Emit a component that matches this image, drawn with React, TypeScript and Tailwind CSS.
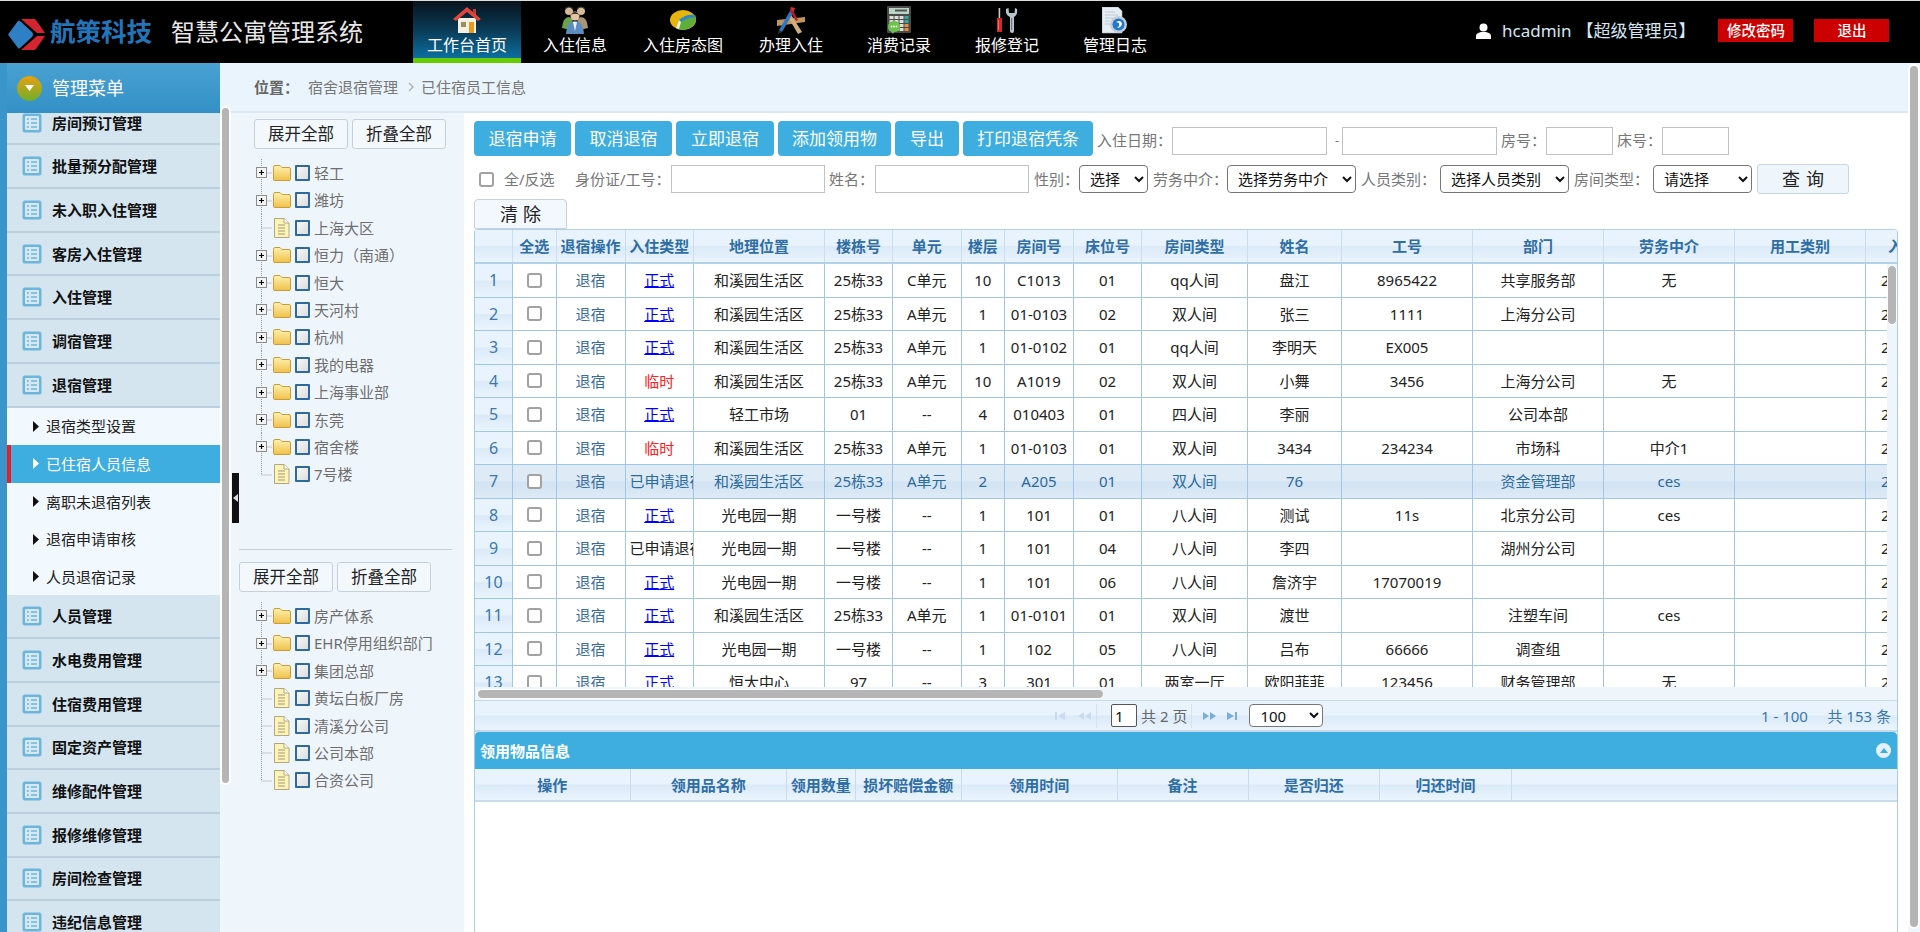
import React from "react";

const cols = "grid grid-cols-[38px_43.5px_69px_68.5px_131px_68px_68.5px_43.5px_69px_68px_106px_94px_131px_131px_131px_131px_131px]";
const headBg = "bg-[linear-gradient(180deg,#e9f3fd_0%,#e9f3fd_48%,#dbeaf8_52%,#eaf4fd_100%)]";

const menuTop = ["房间预订管理", "批量预分配管理", "未入职入住管理", "客房入住管理", "入住管理", "调宿管理", "退宿管理"];
const menuBottom = ["人员管理", "水电费用管理", "住宿费用管理", "固定资产管理", "维修配件管理", "报修维修管理", "房间检查管理", "违纪信息管理"];
const subs = ["退宿类型设置", "已住宿人员信息", "离职未退宿列表", "退宿申请审核", "人员退宿记录"];

const heads = ["", "全选", "退宿操作", "入住类型", "地理位置", "楼栋号", "单元", "楼层", "房间号", "床位号", "房间类型", "姓名", "工号", "部门", "劳务中介", "用工类别"];

type Row = string[];
const H = "和溪园生活区", G = "光电园一期";
const rows: Row[] = [
  ["正式", H, "25栋33", "C单元", "10", "C1013", "01", "qq人间", "盘江", "8965422", "共享服务部", "无"],
  ["正式", H, "25栋33", "A单元", "1", "01-0103", "02", "双人间", "张三", "1111", "上海分公司", ""],
  ["正式", H, "25栋33", "A单元", "1", "01-0102", "01", "qq人间", "李明天", "EX005", "", ""],
  ["临时", H, "25栋33", "A单元", "10", "A1019", "02", "双人间", "小舞", "3456", "上海分公司", "无"],
  ["正式", "轻工市场", "01", "--", "4", "010403", "01", "四人间", "李丽", "", "公司本部", ""],
  ["临时", H, "25栋33", "A单元", "1", "01-0103", "01", "双人间", "3434", "234234", "市场科", "中介1"],
  ["已申请退宿", H, "25栋33", "A单元", "2", "A205", "01", "双人间", "76", "", "资金管理部", "ces"],
  ["正式", G, "一号楼", "--", "1", "101", "01", "八人间", "测试", "11s", "北京分公司", "ces"],
  ["已申请退宿", G, "一号楼", "--", "1", "101", "04", "八人间", "李四", "", "湖州分公司", ""],
  ["正式", G, "一号楼", "--", "1", "101", "06", "八人间", "詹济宇", "17070019", "", ""],
  ["正式", H, "25栋33", "A单元", "1", "01-0101", "01", "双人间", "渡世", "", "注塑车间", "ces"],
  ["正式", G, "一号楼", "--", "1", "102", "05", "八人间", "吕布", "66666", "调查组", ""],
  ["正式", "恒大中心", "97", "--", "3", "301", "01", "两室一厅", "欧阳菲菲", "123456", "财务管理部", "无"],
];

function HouseIcon() {
  return (
    <svg width="28" height="27" viewBox="0 0 28 27">
      <rect x="20" y="2" width="3" height="6" fill="#b5403a" />
      <rect x="5" y="11" width="18" height="15" fill="#f5f0e4" />
      <rect x="16" y="15" width="5" height="11" fill="#eb9a1e" />
      <rect x="8" y="15" width="5" height="5" fill="#9c8f5e" />
      <path d="M14 0 L28 12 L25 14 L14 5 L3 14 L0 12 Z" fill="#e2443c" />
    </svg>
  );
}
function PeopleIcon() {
  return (
    <svg width="26" height="28" viewBox="0 0 26 28">
      <circle cx="7" cy="5" r="4" fill="#d9b99a" />
      <path d="M3 4 Q7 -1 11 4 L11 2 Q7 -1 3 2Z" fill="#333" />
      <circle cx="19" cy="5" r="4" fill="#d9b99a" />
      <path d="M15 4 Q19 -1 23 4 L23 2 Q19 -1 15 2Z" fill="#333" />
      <path d="M0 22 Q1 11 7 11 L11 13 L8 24 Z" fill="#6aa24a" />
      <path d="M26 22 Q25 11 19 11 L15 13 L18 24 Z" fill="#a89672" />
      <path d="M4 28 Q5 15 13 15 Q21 15 22 28 Z" fill="#5c8cc0" />
      <path d="M11 16 L13 25 L15 16 Z" fill="#eef4fa" />
      <circle cx="13" cy="10" r="4.5" fill="#e4c4a4" />
      <path d="M8.5 9 Q13 3 17.5 9 Q13 6.5 8.5 9Z" fill="#222" />
    </svg>
  );
}
function PieIcon() {
  return (
    <svg width="26" height="20" viewBox="0 0 26 20">
      <ellipse cx="13" cy="10" rx="13" ry="10" fill="#e8b40e" />
      <path d="M9 10 Q16 4 25 5 Q27 9 25 13 Q20 20 13 20 Q8 20 6 18 Z" fill="#5dae3a" />
      <path d="M9 10 Q16 4 25 5 L25.6 7 Q16 8 11 12 Z" fill="#2f86c9" />
      <path d="M6 18 L9 10 L11 12 L9 19 Z" fill="#f3f3d0" />
    </svg>
  );
}
function ToolsAIcon() {
  return (
    <svg width="28" height="28" viewBox="0 0 28 28">
      <path d="M0 14 L28 11 L28 16 L0 20 Z" fill="#c09460" />
      <path d="M13 7 L25 26 L21 28 L11 11 Z" fill="#cfae80" />
      <path d="M16 7 L5 26 L2 24 L13 5 Z" fill="#2a78c4" />
      <path d="M13 5 L14 1 L18 2 L16 7 Z" fill="#d8323c" />
      <path d="M2 24 L1 28 L5 26 Z" fill="#333" />
      <path d="M15 3 L21 14 L19 15 L13 5 Z" fill="#b02030" />
    </svg>
  );
}
function CalcIcon() {
  const c = ["#ddd", "#ddd", "#ddd", "#3aa6a0", "#ddd", "#ddd", "#ddd", "#3aa6a0", "#ddd", "#ddd", "#ddd", "#e8913a", "#ddd", "#ddd", "#ddd", "#e8913a"];
  return (
    <svg width="24" height="28" viewBox="0 0 24 28">
      <rect width="24" height="27" rx="1" fill="#4a4a4a" />
      <rect x="2" y="2" width="20" height="6" fill="#b9d4c4" />
      <rect x="8" y="3.5" width="12" height="2" fill="#555" />
      {c.map((f, i) => (
        <rect key={i} x={2.5 + (i % 4) * 5} y={10 + Math.floor(i / 4) * 4} width="4" height="3" fill={f} />
      ))}
      <path d="M1 21 Q1 15 7 15 Q13 15 13 21 Q13 26 7 26 L6 28 L4 25.5 Q1 24 1 21Z" fill="#6dc24a" />
      <circle cx="4.5" cy="20.5" r="0.9" fill="#fff" />
      <circle cx="7" cy="20.5" r="0.9" fill="#fff" />
      <circle cx="9.5" cy="20.5" r="0.9" fill="#fff" />
    </svg>
  );
}
function RepairIcon() {
  return (
    <svg width="22" height="25" viewBox="0 0 22 25">
      <rect x="2.6" y="0" width="1.6" height="10" fill="#c8c8c8" />
      <path d="M1 10 H6 V24 H1Z" fill="#cf2a2a" />
      <rect x="2" y="12" width="1" height="10" fill="#f07070" />
      <path d="M10 1 Q9 7 14 9 L14 23 Q14 25 16 25 Q18 25 18 23 L18 9 Q22 7 21 1 L19 0 L18.5 5 L13 5 L12.5 0 Z" fill="#b8c4cc" />
      <path d="M15 10 h1.2 v12 h-1.2Z" fill="#6c7a84" />
    </svg>
  );
}
function DocIcon() {
  return (
    <svg width="26" height="27" viewBox="0 0 26 27">
      <path d="M0 0 H16 L20 4 V26 H0 Z" fill="#e7edf5" stroke="#aab6c4" strokeWidth="0.6" />
      <path d="M3 5 H13 M3 8 H16 M3 11 H11 M3 14 H8 M3 17 H8" stroke="#b4bfcc" strokeWidth="0.8" />
      <circle cx="16.5" cy="17.5" r="8.5" fill="#c4ccd6" />
      <circle cx="16.5" cy="17.5" r="6" fill="#1f78c8" />
      <path d="M14 15 Q19 12 20 17 Q19 21 15 21 Q18 19 17 16 Z" fill="#fff" />
    </svg>
  );
}

const navs: [string, React.ReactNode][] = [
  ["工作台首页", <HouseIcon />],
  ["入住信息", <PeopleIcon />],
  ["入住房态图", <PieIcon />],
  ["办理入住", <ToolsAIcon />],
  ["消费记录", <CalcIcon />],
  ["报修登记", <RepairIcon />],
  ["管理日志", <DocIcon />],
];

function Logo() {
  return (
    <svg width="37" height="31" viewBox="0 0 37 31">
      <path d="M0 15.5 L10 2 Q11 1 12 2 L24 13 Q26 15.5 24 18 L12 29 Q11 30 10 29 Z" fill="#2f7fc4" />
      <path d="M13 0 H26 Q27 0 28 1 L37 14 H29 Z" fill="#d3242f" />
      <path d="M13 31 H26 Q27 31 28 30 L37 17 H29 Z" fill="#d3242f" />
    </svg>
  );
}

function MenuIcon() {
  return (
    <svg width="20" height="20" viewBox="0 0 20 20" className="flex-none">
      <rect x="0.5" y="0.5" width="19" height="19" rx="2.5" fill="#6eb5db" />
      <rect x="3" y="3" width="14" height="14" rx="1" fill="#d6e8f2" />
      <path d="M5 6 H7 M9 6 H15 M5 10 H7 M9 10 H15 M5 14 H7 M9 14 H15" stroke="#6eb5db" strokeWidth="1.6" />
    </svg>
  );
}

function MenuRow({ label }: { label: string }) {
  return (
    <div className="flex h-[43.7px] flex-none items-center border-b-2 border-[#bccfdc] bg-[#d4e5f0] pl-[15px]">
      <MenuIcon />
      <span className="ml-[10px] text-[15px] leading-5 font-bold text-[#111]">{label}</span>
    </div>
  );
}

function Connector({ kind, last }: { kind: "folder" | "file"; last?: boolean }) {
  return (
    <svg width="17" height="27" viewBox="0 0 17 27" className="flex-none">
      <path d={last ? "M5.5 0 V14" : "M5.5 0 V27"} stroke="#999" strokeDasharray="1 1" fill="none" />
      <path d="M5.5 14 H16" stroke="#999" strokeDasharray="1 1" fill="none" />
      {kind === "folder" && (
        <g>
          <rect x="0.5" y="8.5" width="10" height="10" fill="#f4f4f4" stroke="#8c8c8c" />
          <path d="M3 13.5 H8 M5.5 11 V16" stroke="#000" strokeWidth="1.2" />
        </g>
      )}
    </svg>
  );
}
function FolderIcon() {
  return (
    <svg width="18" height="18" viewBox="0 0 18 18" className="flex-none">
      <defs>
        <linearGradient id="fg" x1="0" y1="0" x2="0" y2="1">
          <stop offset="0" stopColor="#fff2b0" />
          <stop offset="1" stopColor="#f0c04a" />
        </linearGradient>
      </defs>
      <path d="M0.5 3.5 Q0.5 1.5 2 1.5 H7 L9 3.5 H16 Q17.5 3.5 17.5 5 V15.5 Q17.5 16.5 16 16.5 H2 Q0.5 16.5 0.5 15.5 Z" fill="url(#fg)" stroke="#c99c3a" />
    </svg>
  );
}
function FileIcon() {
  return (
    <svg width="18" height="20" viewBox="0 0 18 20" className="flex-none">
      <path d="M1.5 0.5 H11 L16 5 V19.5 H1.5 Z" fill="#fff4b4" stroke="#b0a684" />
      <path d="M11 0.5 V5 H16" fill="#fff" stroke="#b0a684" />
      <path d="M5 7 H12 M5 10 H12 M5 13 H12 M5 16 H12" stroke="#a09a80" strokeWidth="1.2" />
    </svg>
  );
}
function TreeCheck() {
  return <span className="ml-[4px] h-[16px] w-[15px] flex-none rounded-[1px] border-2 border-[#2f6a9e] bg-[linear-gradient(135deg,#f8f8f8,#dcdcdc)]" />;
}
function TreeRow({ label, file, last }: { label: string; file?: boolean; last?: boolean }) {
  return (
    <div className="flex h-[27.4px] items-center">
      <Connector kind={file ? "file" : "folder"} last={last} />
      {file ? <FileIcon /> : <FolderIcon />}
      <TreeCheck />
      <span className="ml-[4px] text-[15px] leading-5 whitespace-nowrap text-[#6e6e6e]">{label}</span>
    </div>
  );
}
function TreeBtn({ label }: { label: string }) {
  return (
    <button className="h-[30px] w-[94px] rounded-[3px] border border-[#c6d0d8] bg-[#f3f8fc] text-[16.5px] leading-none text-[#222]">
      {label}
    </button>
  );
}
function BlueBtn({ label, w }: { label: string; w: string }) {
  return (
    <button className={`h-[35px] flex-none rounded-[4px] bg-[#3eaee0] text-[17px] leading-none text-white ${w}`}>{label}</button>
  );
}
function Label({ children, w }: { children: React.ReactNode; w: string }) {
  return <span className={`flex-none text-[15px] leading-5 whitespace-nowrap text-[#777] ${w}`}>{children}</span>;
}
const inputCls = "h-[28px] flex-none border border-[#c2c2c2] bg-white";
const selectCls = "h-[28px] flex-none rounded-[4px] border border-[#767676] bg-white pl-[6px] text-[15px] text-[#111]";
const checkCls = "h-[15px] w-[15px] flex-none appearance-none rounded-[3px] border-2 border-[#a2a2a2] bg-white";

function PagerGlyph({ kind, color }: { kind: "first" | "prev" | "next" | "last"; color: string }) {
  const d = {
    first: "M1 2 H3 V10 H1Z M11 2 V10 L4 6Z",
    prev: "M6 2 V10 L0 6Z M13 2 V10 L7 6Z",
    next: "M0 2 V10 L6 6Z M7 2 V10 L13 6Z",
    last: "M0 2 V10 L7 6Z M8 2 H10 V10 H8Z",
  }[kind];
  return (
    <svg width="13" height="12" viewBox="0 0 13 12" className="flex-none">
      <path d={d} fill={color} />
    </svg>
  );
}

export default function App() {
  return (
    <div className="relative flex h-[932px] w-[1920px] flex-col overflow-hidden bg-white font-['Noto_Sans','Noto_Sans_CJK_SC',sans-serif]">
      {/* top bar */}
      <header className="flex h-[63px] flex-none border-t border-[#ddd] bg-black">
        <div className="flex w-[413px] flex-none items-center pl-[8px]">
          <div className="mt-[4px]"><Logo /></div>
          <span className="ml-[5px] text-[25.5px] leading-none font-bold text-[#2474b8]">航策科技</span>
          <span className="ml-[19px] text-[24px] leading-none text-[#e8e8e8]">智慧公寓管理系统</span>
        </div>
        {navs.map(([label, icon], i) => (
          <div
            key={label}
            className={
              i === 0
                ? "flex h-[62px] w-[108px] flex-none flex-col items-center border-b-[5px] border-[#66cc00] bg-[linear-gradient(180deg,#07131c_0%,#0a3a55_50%,#0b6f9f_100%)]"
                : "flex h-[62px] w-[108px] flex-none flex-col items-center"
            }
          >
            <div className="flex h-[35px] flex-none items-center justify-center pt-[3px]">{icon}</div>
            <span className="text-[16px] leading-[18px] text-white">{label}</span>
          </div>
        ))}
        <div className="ml-[307px] flex flex-none items-center pb-[3px]">
          <svg width="15" height="16" viewBox="0 0 15 16">
            <circle cx="7.5" cy="4.5" r="4" fill="#fff" />
            <path d="M0 16 V13 Q0 10 5 9 H10 Q15 10 15 13 V16 Z" fill="#fff" />
          </svg>
          <span className="ml-[11px] text-[17px] leading-6 text-[#d4e6f4]">hcadmin</span>
          <span className="ml-[5px] text-[17px] leading-6 text-[#d4e6f4]">【超级管理员】</span>
        </div>
        <div className="ml-[23px] flex flex-none items-center gap-[21px] pb-[3px]">
          <button className="h-[23px] w-[75px] bg-[#cc0000] text-[14.5px] leading-none font-medium text-white">修改密码</button>
          <button className="h-[23px] w-[75px] bg-[#cc0000] text-[14.5px] leading-none font-medium text-white">退出</button>
        </div>
      </header>

      <div className="flex min-h-0 flex-1">
        {/* sidebar */}
        <aside className="flex w-[220px] flex-none flex-col overflow-hidden border-l-[7px] border-[#3a96ca]">
          <div className="flex h-[50px] flex-none items-center bg-[linear-gradient(180deg,#4aa1d2,#3390c6)] pl-[10px]">
            <span className="flex h-[25px] w-[25px] items-center justify-center rounded-full bg-[linear-gradient(180deg,#e8a010,#6fae2a)]">
              <svg width="9" height="6" viewBox="0 0 9 6"><path d="M0 0 H9 L4.5 6Z" fill="#fff" /></svg>
            </span>
            <span className="ml-[10px] text-[18px] leading-6 text-white">管理菜单</span>
          </div>
          <div className="min-h-0 flex-1 overflow-hidden">
            <div className="mt-[-11.3px] flex flex-col">
              {menuTop.map((m) => <MenuRow key={m} label={m} />)}
              <div className="flex flex-none flex-col bg-[#f1f8fe]">
                {subs.map((s, i) => (
                  <div
                    key={s}
                    className={
                      i === 1
                        ? "flex h-[37.6px] items-center border-l-4 border-[#e0222a] bg-[#3eaee0] pl-[22px] text-white"
                        : "flex h-[37.6px] items-center pl-[26px] text-[#222]"
                    }
                  >
                    <svg width="6" height="11" viewBox="0 0 6 11" className="flex-none"><path d="M0 0 L6 5.5 L0 11Z" fill={i === 1 ? "#fff" : "#111"} /></svg>
                    <span className="ml-[7px] text-[15px] leading-5">{s}</span>
                  </div>
                ))}
              </div>
              {menuBottom.map((m) => <MenuRow key={m} label={m} />)}
            </div>
          </div>
        </aside>

        <div className="flex min-w-0 flex-1 flex-col">
          {/* breadcrumb */}
          <div className="flex h-[50px] flex-none items-center border-b-2 border-[#dbe8f1] bg-[#eaf4fc] pl-[34px] text-[15px] leading-5 text-[#777]">
            <span className="w-[54px] font-bold text-[#666]">位置：</span>
            <span>宿舍退宿管理</span>
            <svg width="6" height="10" viewBox="0 0 6 10" className="mr-[7px] ml-[10px]"><path d="M1 1 L5 5 L1 9" fill="none" stroke="#aaa" strokeWidth="1.2" /></svg>
            <span>已住宿员工信息</span>
          </div>

          <div className="flex min-h-0 flex-1">
            {/* tree pane */}
            <div className="relative w-[244px] flex-none overflow-hidden bg-[#eef6fc]">
              <div className="ml-[34px] flex gap-[4px] pt-[6px]">
                <TreeBtn label="展开全部" />
                <TreeBtn label="折叠全部" />
              </div>
              <div className="mt-[10.3px] ml-[36px]">
                <TreeRow label="轻工" />
                <TreeRow label="潍坊" />
                <TreeRow label="上海大区" file />
                <TreeRow label="恒力（南通）" />
                <TreeRow label="恒大" />
                <TreeRow label="天河村" />
                <TreeRow label="杭州" />
                <TreeRow label="我的电器" />
                <TreeRow label="上海事业部" />
                <TreeRow label="东莞" />
                <TreeRow label="宿舍楼" />
                <TreeRow label="7号楼" file last />
              </div>
              <div className="mt-[61px] ml-[19px] h-px w-[213px] bg-[#c8ced3]" />
              <div className="mt-[12px] ml-[19px] flex gap-[4px]">
                <TreeBtn label="展开全部" />
                <TreeBtn label="折叠全部" />
              </div>
              <div className="mt-[10.3px] ml-[36px]">
                <TreeRow label="房产体系" />
                <TreeRow label="EHR停用组织部门" />
                <TreeRow label="集团总部" />
                <TreeRow label="黄坛白板厂房" file />
                <TreeRow label="清溪分公司" file />
                <TreeRow label="公司本部" file />
                <TreeRow label="合资公司" file last />
              </div>
              {/* collapse handle */}
              <div className="absolute top-[360px] left-[12px] flex h-[50px] w-[7px] items-center justify-center bg-[#111]">
                <svg width="5" height="8" viewBox="0 0 5 8"><path d="M5 0 V8 L0 4Z" fill="#ddd" /></svg>
              </div>
            </div>

            {/* main */}
            <div className="flex min-w-0 flex-1 flex-col overflow-hidden pt-[8px] pl-[10px]">
              <div className="flex h-[35px] flex-none items-center gap-[4px]">
                <BlueBtn label="退宿申请" w="w-[97px]" />
                <BlueBtn label="取消退宿" w="w-[97px]" />
                <BlueBtn label="立即退宿" w="w-[98px]" />
                <BlueBtn label="添加领用物" w="w-[113px]" />
                <BlueBtn label="导出" w="w-[64px]" />
                <BlueBtn label="打印退宿凭条" w="w-[130px]" />
                <Label w="w-[75px] pt-[2px]">入住日期：</Label>
                <span className={`${inputCls} mt-[5px] ml-[-4px] w-[155px]`} />
                <span className="mt-[2px] ml-[4px] w-[4px] text-[13px] leading-5 text-[#777]">-</span>
                <span className={`${inputCls} mt-[5px] ml-[-1px] w-[155px]`} />
                <Label w="w-[45px] pt-[2px]">房号：</Label>
                <span className={`${inputCls} mt-[5px] ml-[-4px] w-[67px]`} />
                <Label w="w-[45px] pt-[2px]">床号：</Label>
                <span className={`${inputCls} mt-[5px] ml-[-4px] w-[67px]`} />
              </div>

              <div className="mt-[8px] flex h-[30px] flex-none items-center">
                <input type="checkbox" className={`${checkCls} ml-[5px]`} />
                <Label w="w-[71px] ml-[10px]">全/反选</Label>
                <Label w="w-[96px]">身份证/工号：</Label>
                <span className={`${inputCls} w-[154px]`} />
                <Label w="w-[46px] ml-[4px]">姓名：</Label>
                <span className={`${inputCls} w-[154px]`} />
                <Label w="w-[45px] ml-[5px]">性别：</Label>
                <select className={`${selectCls} w-[69px]`} defaultValue="选择"><option>选择</option></select>
                <Label w="w-[74px] ml-[5px]">劳务中介：</Label>
                <select className={`${selectCls} w-[129px]`}><option>选择劳务中介</option></select>
                <Label w="w-[79px] ml-[5px]">人员类别：</Label>
                <select className={`${selectCls} w-[129px]`}><option>选择人员类别</option></select>
                <Label w="w-[79px] ml-[5px]">房间类型：</Label>
                <select className={`${selectCls} w-[99px]`}><option>请选择</option></select>
                <button className="ml-[5px] h-[30px] w-[92px] flex-none rounded-[3px] border border-[#c8d6e2] bg-[#eef6fc] pl-[6px] text-[18px] leading-none tracking-[6px] text-[#222]">查询</button>
              </div>

              <button className="mt-[5px] h-[30px] w-[93px] flex-none rounded-t-[4px] rounded-b-[2px] border border-[#c8d2da] bg-[#f2f8fd] pl-[5px] text-[18px] leading-none tracking-[5px] text-[#222]">清除</button>

              {/* grid */}
              <div className="flex w-[1424px] flex-none flex-col overflow-hidden rounded-t-[4px] border-x border-[#a9cde6]">
                <div className={`${cols} h-[35px] flex-none border-t border-b-2 border-[#b3d2ea] ${headBg}`}>
                  {heads.map((h, i) => (
                    <div key={i} className="flex items-center justify-center border-r border-[#c9dff0] text-[15px] leading-5 font-semibold whitespace-nowrap text-[#2f6ea5]">{h}</div>
                  ))}
                  <div className="flex items-center overflow-hidden pl-[22px] text-[15px] leading-5 font-semibold whitespace-nowrap text-[#2f6ea5]">入住时间</div>
                </div>
                <div className="flex h-[436px] flex-none">
                  <div className="flex w-[1412px] flex-none flex-col">
                    <div className="h-[423px] flex-none overflow-hidden">
                      {rows.map((r, i) => {
                        const sel = i === 6;
                        const txt = sel ? "text-[#2a6a9c]" : "text-[#222]";
                        return (
                          <div
                            key={i}
                            className={`${cols} h-[33.5px] border-b border-[#a0c7e4] text-[15px] leading-5 whitespace-nowrap ${txt} ${sel ? "bg-[linear-gradient(180deg,#deeaf6_0%,#deeaf6_48%,#d2e3f3_52%,#deeaf6_100%)]" : ""}`}
                          >
                            <div className={`flex items-center justify-center border-r border-[#a0c7e4] text-[16px] text-[#3a78ad] ${sel ? "" : headBg}`}>{i + 1}</div>
                            <div className="flex items-center justify-center border-r border-[#a0c7e4]"><input type="checkbox" className={checkCls} /></div>
                            <div className="flex items-center justify-center border-r border-[#a0c7e4] text-[#3a6c9c]">退宿</div>
                            <div className="flex items-center justify-center overflow-hidden border-r border-[#a0c7e4]">
                              {r[0] === "正式" && <span className="text-[#0000ff] underline">正式</span>}
                              {r[0] === "临时" && <span className="text-[#ff2020]">临时</span>}
                              {r[0].length > 2 && <span className="w-full overflow-hidden pl-[4px]">{r[0]}</span>}
                            </div>
                            {r.slice(1).map((c, j) => (
                              <div key={j} className="flex items-center justify-center overflow-hidden border-r border-[#a0c7e4]">{c}</div>
                            ))}
                            <div className="border-r border-[#a0c7e4]" />
                            <div className="flex items-center overflow-hidden pl-[15px]">2019-08-13</div>
                          </div>
                        );
                      })}
                    </div>
                    <div className="flex h-[13px] flex-none items-center bg-[#eef6fc] pl-[2px]">
                      <div className="h-[10px] w-[627px] rounded-full border border-white bg-[#b5b5b5]" />
                    </div>
                  </div>
                  <div className="w-[10px] flex-none bg-[#eef6fc] pt-[1px]">
                    <div className="h-[60px] w-[10px] rounded-full border border-white bg-[#b5b5b5]" />
                  </div>
                </div>
                <div className={`flex h-[32px] flex-none items-center border-t border-b-2 border-t-[#c9dcec] border-b-[#c5d9ea] ${headBg}`}>
                  <div className="ml-[579px] flex items-center gap-[11px]">
                    <PagerGlyph kind="first" color="#c9dbec" />
                    <PagerGlyph kind="prev" color="#c9dbec" />
                  </div>
                  <span className="ml-[5px] h-[24px] w-px bg-[#d5e1ec]" />
                  <span className="ml-[14px] flex h-[23px] w-[26px] items-center rounded-[2px] border border-[#555] bg-white pl-[3px] text-[15px] leading-5 text-[#111]">1</span>
                  <span className="ml-[4px] text-[15px] leading-5 text-[#666]">共 2 页</span>
                  <span className="ml-[4px] h-[24px] w-px bg-[#d5e1ec]" />
                  <div className="ml-[11px] flex items-center gap-[11px]">
                    <PagerGlyph kind="next" color="#78aed8" />
                    <PagerGlyph kind="last" color="#78aed8" />
                  </div>
                  <select className="ml-[9px] h-[23px] w-[74px] flex-none rounded-[4px] border border-[#767676] bg-white pl-[6px] text-[15px] text-[#111]"><option>100</option></select>
                  <span className="mr-[6px] ml-auto text-[15px] leading-5 whitespace-pre text-[#3a78ad]">1 - 100     共 153 条</span>
                </div>
              </div>

              {/* bottom panel */}
              <div className="flex min-h-0 w-[1424px] flex-1 flex-col border-x border-[#a9cde6]">
                <div className="flex h-[37px] flex-none items-center justify-between rounded-t-[4px] bg-[#3eaee0] pr-[6px] pl-[5px]">
                  <span className="text-[15px] leading-5 font-bold text-white">领用物品信息</span>
                  <span className="flex h-[15px] w-[15px] items-center justify-center rounded-full bg-[#e4f1fa]">
                    <svg width="8" height="5" viewBox="0 0 8 5"><path d="M4 0 L8 5 H0Z" fill="#3eaee0" /></svg>
                  </span>
                </div>
                <div className={`grid h-[33px] flex-none grid-cols-[155.5px_156.5px_68.5px_106.5px_155.5px_131px_131.5px_132px_1fr] border-b-2 border-[#c9dcec] ${headBg}`}>
                  {["操作", "领用品名称", "领用数量", "损坏赔偿金额", "领用时间", "备注", "是否归还", "归还时间"].map((h) => (
                    <div key={h} className="flex items-center justify-center border-r border-[#c9dcec] text-[15px] leading-5 font-semibold whitespace-nowrap text-[#2f6ea5]">{h}</div>
                  ))}
                  <div />
                </div>
                <div className="flex-1 bg-white" />
              </div>
            </div>
          </div>
        </div>
      </div>

      {/* overlay scrollbars */}
      <div className="absolute top-[106px] left-[220px] h-[679px] w-[11px] rounded-full border-2 border-white bg-[#b5b5b5]" />
      <div className="absolute top-[64px] left-[1908px] h-[868px] w-[12px] bg-[#eef6fc]">
        <div className="h-[865px] w-[12px] rounded-full border-2 border-white bg-[#b5b5b5]" />
      </div>
    </div>
  );
}
